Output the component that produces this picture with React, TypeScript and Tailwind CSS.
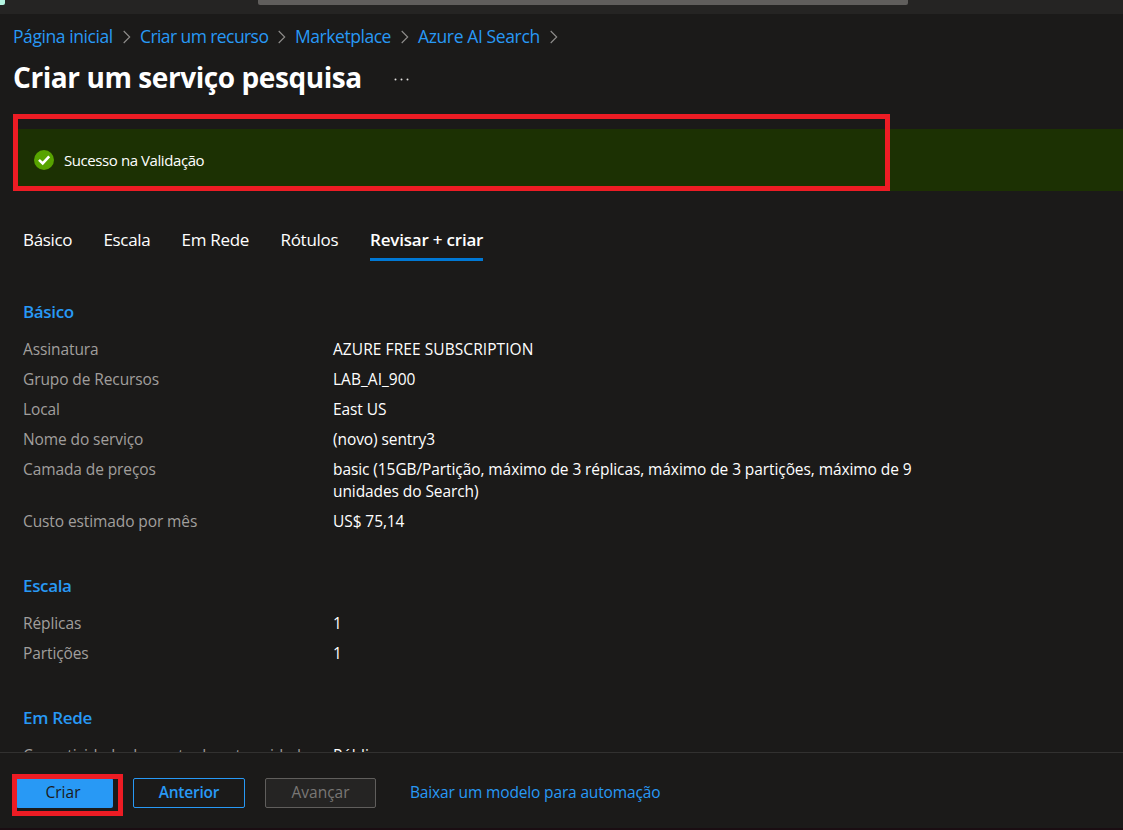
import type { ReactNode } from "react";

function Chevron() {
  return (
    <svg className="h-[14px] w-[8px] shrink-0" viewBox="0 0 8 14" fill="none" stroke="#8f8e8c" strokeWidth="1.1">
      <path d="M0.7 1 L6.7 7 L0.7 13" />
    </svg>
  );
}

function Crumb({ children, className }: { children: ReactNode; className: string }) {
  return (
    <div className={`flex shrink-0 items-center justify-between ${className}`}>
      <a className="pb-[2px] whitespace-nowrap">{children}</a>
      <Chevron />
    </div>
  );
}

function Row({ label, value, valueClass = "tracking-[-0.085px]" }: { label: string; value: ReactNode; valueClass?: string }) {
  return (
    <div className="flex pb-2">
      <dt className="w-[310px] shrink-0 tracking-[-0.1px] whitespace-nowrap text-[#a19f9d]">{label}</dt>
      <dd className={`whitespace-nowrap text-white ${valueClass}`}>{value}</dd>
    </div>
  );
}

function Section({ title, titleClass, className, children }: { title: string; titleClass: string; className: string; children: ReactNode }) {
  return (
    <section className={className}>
      <h2 className="mb-[15px] h-[22px] text-[17px] leading-[22px] font-semibold text-[#2899f5]">
        <span className={titleClass}>{title}</span>
      </h2>
      <dl className="text-[15.5px] leading-[22px]">{children}</dl>
    </section>
  );
}

export default function App() {
  return (
    <div className="relative flex h-[830px] w-[1123px] flex-col overflow-hidden bg-[#1b1a19] font-['Open_Sans','Noto_Sans',sans-serif] text-white">
      <div className="flex h-[14px] shrink-0 bg-[#252423]">
        <div className="h-[5px] w-[5px] rounded-br-[2px] bg-[#b4f5e1]" />
        <div className="ml-[253px] h-[5px] w-[650px] rounded-b-[2px] bg-[#605e5c]" />
      </div>

      <nav className="flex h-[46px] shrink-0 items-center gap-[9px] pl-[13px] text-[17.5px] text-[#2899f5]">
        <Crumb className="w-[118px] tracking-[-0.42px]">Página inicial</Crumb>
        <Crumb className="w-[146px] tracking-[-0.58px]">Criar um recurso</Crumb>
        <Crumb className="w-[114px] tracking-[-0.45px]">Marketplace</Crumb>
        <Crumb className="w-[140px] tracking-[-0.38px]">Azure AI Search</Crumb>
      </nav>

      <header className="flex h-[54px] shrink-0 pl-[13px]">
        <h1 className="-mt-px w-[381px] text-[28px] leading-[36px] font-bold whitespace-nowrap tracking-[-0.43px]">Criar um serviço pesquisa</h1>
        <svg className="mt-[18px] h-[3px] w-[15px]" viewBox="0 0 15 3" fill="#e1dfdd">
          <circle cx="1.5" cy="1.5" r="1" />
          <circle cx="7.5" cy="1.5" r="1" />
          <circle cx="13.5" cy="1.5" r="1" />
        </svg>
      </header>

      <div className="mt-[15px] ml-[13px] flex h-[62px] shrink-0 items-center bg-[#1c3103] pl-[21px]">
        <svg className="h-5 w-5" viewBox="0 0 20 20">
          <circle cx="10" cy="10" r="10" fill="#57a300" />
          <path d="M5 9.9 L8.7 13.5 L15.2 6.4" fill="none" stroke="#fff" strokeWidth="2.6" />
        </svg>
        <span className="ml-[10px] text-[15px] whitespace-nowrap tracking-[-0.42px]">Sucesso na Validação</span>
      </div>

      <div className="mt-[36px] flex h-[34px] shrink-0 pl-[23px] text-[17px] leading-[26px] whitespace-nowrap">
        <span className="w-[80.5px] tracking-[-0.33px]">Básico</span>
        <span className="w-[78px] tracking-[-0.35px]">Escala</span>
        <span className="w-[99px] tracking-[-0.3px]">Em Rede</span>
        <span className="w-[89.5px] tracking-[-0.3px]">Rótulos</span>
        <span className="h-[34px] w-[113px] border-b-[3px] border-[#0078d4] font-semibold tracking-[-0.2px]">Revisar + criar</span>
      </div>

      <main className="min-h-0 flex-1 overflow-hidden pl-[23px]">
        <Section title="Básico" titleClass="tracking-[-0.35px]" className="mt-[40px]">
          <Row label="Assinatura" value="AZURE FREE SUBSCRIPTION" valueClass="tracking-[0.07px]" />
          <Row label="Grupo de Recursos" value="LAB_AI_900" valueClass="tracking-[0.03px]" />
          <Row label="Local" value="East US" />
          <Row label="Nome do serviço" value="(novo) sentry3" />
          <Row
            label="Camada de preços"
            value={
              <>
                basic (15GB/Partição, máximo de 3 réplicas, máximo de 3 partições, máximo de 9
                <br />
                unidades do Search)
              </>
            }
          />
          <Row label="Custo estimado por mês" value="US$ 75,14" />
        </Section>
        <Section title="Escala" titleClass="tracking-[-0.35px]" className="mt-[35px]">
          <Row label="Réplicas" value="1" />
          <Row label="Partições" value="1" />
        </Section>
        <Section title="Em Rede" titleClass="tracking-[-0.3px]" className="mt-[35px]">
          <Row label="Conectividade do ponto de extremidade" value="Público" />
        </Section>
      </main>

      <footer className="flex h-[78px] shrink-0 items-start border-t border-[#323130] pt-[25px] pl-4 text-[15.5px]">
        <button className="h-[30px] w-[97px] rounded-[2px] bg-[#2899f5] pr-[3px] text-[#1b1a19]">Criar</button>
        <button className="ml-5 h-[30px] w-[112px] rounded-[2px] border border-[#2899f5] font-semibold tracking-[-0.2px] text-[#2899f5]">Anterior</button>
        <button className="ml-5 h-[30px] w-[111px] rounded-[2px] border border-[#605e5c] bg-[#252423] text-[#797775]">Avançar</button>
        <a className="ml-[34px] leading-[28px] tracking-[-0.15px] whitespace-nowrap text-[#2899f5]">Baixar um modelo para automação</a>
      </footer>
      <div className="absolute inset-x-0 bottom-0 h-[2px] bg-[#1a0d12]" />

      <div className="absolute top-[114px] left-[13px] h-[77px] w-[877px] border-5 border-[#ed1c24]" />
      <div className="absolute top-[774px] left-[12px] h-[42px] w-[111px] border-5 border-[#ed1c24]" />
    </div>
  );
}
